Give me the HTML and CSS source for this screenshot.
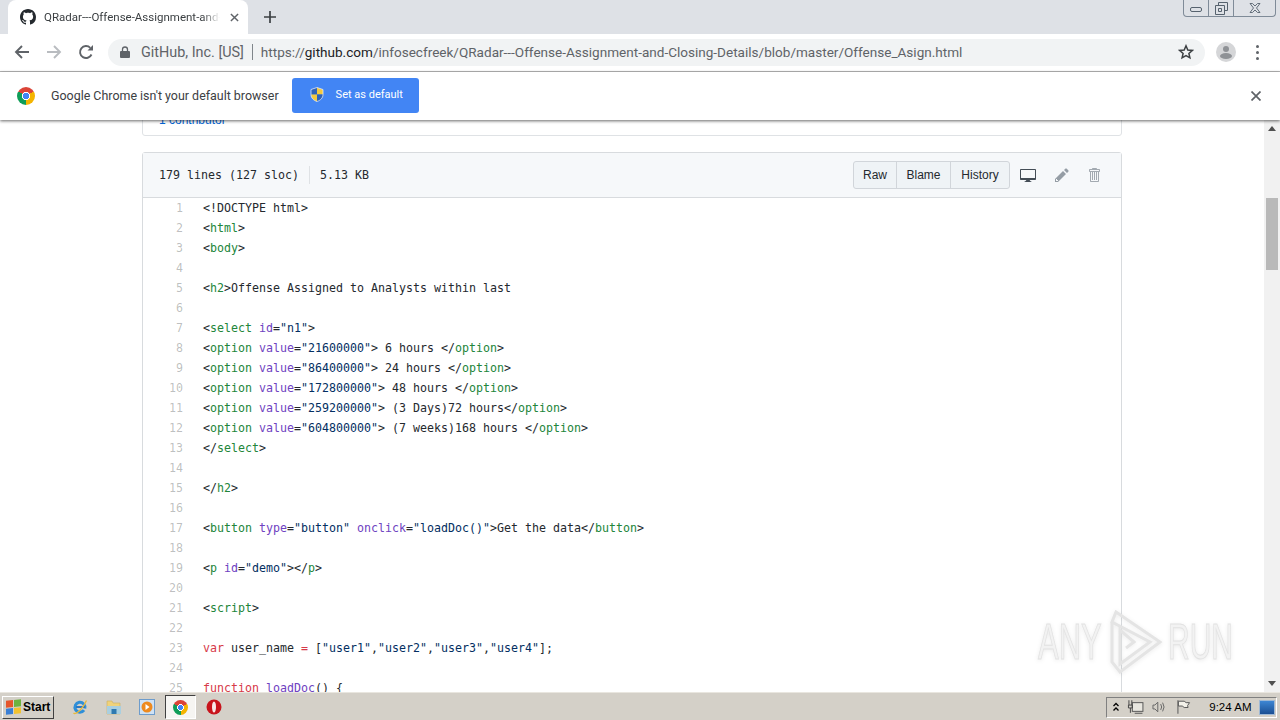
FILE: index.html
```html
<!DOCTYPE html>
<html lang="en">
<head>
    <meta charset="UTF-8">
    <title>QRadar---Offense-Assignment-and-Closing-Details/Offense_Asign.html</title>
    <link rel="stylesheet" href="styles.css">
</head>
<body>

    <div class="tab-strip">
        <div class="tab">
            <svg class="tab-icon" viewBox="0 0 16 16"><path fill="#24292e" d="M8 0C3.58 0 0 3.58 0 8c0 3.54 2.29 6.53 5.47 7.59.4.07.55-.17.55-.38 0-.19-.01-.82-.01-1.49-2.01.37-2.53-.49-2.69-.94-.09-.23-.48-.94-.82-1.13-.28-.15-.68-.52-.01-.53.63-.01 1.08.58 1.23.82.72 1.21 1.87.87 2.33.66.07-.52.28-.87.51-1.07-1.78-.2-3.64-.89-3.64-3.95 0-.87.31-1.59.82-2.15-.08-.2-.36-1.02.08-2.12 0 0 .67-.21 2.2.82.64-.18 1.32-.27 2-.27.68 0 1.36.09 2 .27 1.53-1.04 2.2-.82 2.2-.82.44 1.1.16 1.92.08 2.12.51.56.82 1.27.82 2.15 0 3.07-1.87 3.75-3.65 3.95.29.25.54.73.54 1.48 0 1.07-.01 1.93-.01 2.2 0 .21.15.46.55.38A8.013 8.013 0 0016 8c0-4.42-3.58-8-8-8z"/></svg>
            <span class="tab-title">QRadar---Offense-Assignment-and-Closing-Details</span>
            <svg class="tab-close" viewBox="0 0 10 10"><path d="M1 1l8 8M9 1l-8 8" stroke="#5f6368" stroke-width="1.6"/></svg>
        </div>
        <svg class="new-tab" viewBox="0 0 12 12"><path d="M6 0v12M0 6h12" stroke="#3c4043" stroke-width="1.7"/></svg>
        <div class="window-btns">
            <div class="win-btn win-min"><svg width="12" height="6" viewBox="0 0 12 6"><rect x=".5" y=".5" width="11" height="4" rx="1.5" fill="none" stroke="#56626e"/></svg></div>
            <div class="win-btn win-max"><svg width="13" height="13" viewBox="0 0 13 13"><path d="M3.5 3V.5h9v8H10M.5 3.5h9v9h-9zM3.5 6.5h3v3h-3z" fill="none" stroke="#56626e"/></svg></div>
            <div class="win-btn win-close"><svg width="12" height="10" viewBox="0 0 12 10"><path d="M1 .5h2.5L6 3l2.500-2.500H11L7.500 5 11 9.500H8.500L6 7 3.500 9.500H1L4.500 5z" fill="none" stroke="#56626e" stroke-width=".9"/></svg></div>
        </div>
    </div>

    <div class="toolbar">
        <svg class="nav-icon" viewBox="0 0 16 16"><path d="M15 8H2M8 2L2 8l6 6" fill="none" stroke="#5f6368" stroke-width="1.9"/></svg>
        <svg class="nav-icon" viewBox="0 0 16 16"><path d="M1 8h13M8 2l6 6-6 6" fill="none" stroke="#b9bcc0" stroke-width="1.9"/></svg>
        <svg class="nav-icon" viewBox="0 0 16 16"><path d="M13.500 10.500A6 6 0 1 1 12.300 3.800" fill="none" stroke="#5f6368" stroke-width="1.900"/><path d="M9.500 6.500H15V1z" fill="#5f6368"/></svg>
        <div class="omnibox">
            <svg class="lock" viewBox="0 0 10 12"><path fill="#5f6368" d="M1 5h8a1 1 0 0 1 1 1v5a1 1 0 0 1-1 1H1a1 1 0 0 1-1-1V6a1 1 0 0 1 1-1z"/><path d="M2.500 5.500V3.500a2.500 2.500 0 0 1 5 0v2" fill="none" stroke="#5f6368" stroke-width="1.300"/></svg>
            <span class="site-name">GitHub, Inc. [US]</span>
            <span class="omni-sep"></span>
            <span class="url">https://<b>github.com</b>/infosecfreek/QRadar---Offense-Assignment-and-Closing-Details/blob/master/Offense_Asign.html</span>
            <svg class="star" viewBox="0 0 16 16"><path d="M8 1.800l1.800 4.200 4.500.4-3.400 3 1 4.400L8 11.500l-3.900 2.300 1-4.400-3.400-3 4.500-.4z" fill="none" stroke="#3c4043" stroke-width="1.500"/></svg>
        </div>
        <div class="avatar"><svg width="20" height="20" viewBox="0 0 20 20"><circle cx="10" cy="7" r="3" fill="#8f9296"/><ellipse cx="10" cy="14" rx="6" ry="3" fill="#8f9296"/></svg></div>
        <div class="menu-dots"><i></i><i></i><i></i></div>
    </div>

    <div class="infobar">
        <span class="chrome-logo info-logo"></span>
        <span class="info-text">Google Chrome isn't your default browser</span>
        <button class="default-btn">
            <svg width="14" height="15" viewBox="0 0 14 15"><path d="M7 .5L1 2.500v5H7z" fill="#2f63b8"/><path d="M7 .5l6 2v5H7z" fill="#f4c93d"/><path d="M1 7.500C1 11 3.500 13.300 7 14.500v-7z" fill="#f4c93d"/><path d="M13 7.500c0 3.500-2.500 5.800-6 7v-7z" fill="#2f63b8"/><path d="M7 .5l6 2v5c0 3.500-2.500 5.800-6 7-3.500-1.200-6-3.500-6-7v-5z" fill="none" stroke="#dfe7f5" stroke-width=".8"/></svg>
            Set as default
        </button>
        <svg class="info-close" viewBox="0 0 10 10"><path d="M.5.500l9 9M9.500.500l-9 9" stroke="#5f6368" stroke-width="1.700"/></svg>
    </div>

    <div class="viewport">
        <div class="page">
            <div class="contrib-box">1 contributor</div>

            <div class="file-box">
                <div class="file-header">
                    <div class="file-info">
                        <span>179 lines (127 sloc)</span>
                        <span class="info-sep"></span>
                        <span>5.13 KB</span>
                    </div>
                    <div class="file-actions">
                        <div class="btn-group">
                            <a class="btn">Raw</a>
                            <a class="btn">Blame</a>
                            <a class="btn">History</a>
                        </div>
                        <svg class="act-icon act-desktop" width="16" height="16" viewBox="0 0 16 16"><path d="M15 2H1c-.55 0-1 .45-1 1v9c0 .55.45 1 1 1h5.340c-.25.61-.86 1.390-2.340 2h8c-1.480-.61-2.090-1.390-2.340-2H15c.55 0 1-.45 1-1V3c0-.55-.45-1-1-1zm0 9H1V3h14v8z"/></svg>
                        <svg class="act-icon act-pencil" width="14" height="16" viewBox="0 0 14 16"><path d="M0 12v3h3l8-8-3-3-8 8zm3 2H1v-2h1v1h1v1zm10.300-9.300L12 6 9 3l1.300-1.300a.996.996 0 011.410 0l1.590 1.590c.39.39.39 1.020 0 1.410z"/></svg>
                        <svg class="act-icon act-trash" width="12" height="16" viewBox="0 0 12 16"><path d="M11 2H9c0-.55-.45-1-1-1H5c-.55 0-1 .45-1 1H2c-.55 0-1 .45-1 1v1c0 .55.45 1 1 1v9c0 .55.45 1 1 1h7c.55 0 1-.45 1-1V5c.55 0 1-.45 1-1V3c0-.55-.45-1-1-1zm-1 12H3V5h1v8h1V5h1v8h1V5h1v8h1V5h1v9zm1-10H2V3h9v1z"/></svg>
                    </div>
                </div>

                <table class="code">
                    <tr><td class="num">1</td><td>&lt;!DOCTYPE html&gt;</td></tr>
                    <tr><td class="num">2</td><td>&lt;<span class="t">html</span>&gt;</td></tr>
                    <tr><td class="num">3</td><td>&lt;<span class="t">body</span>&gt;</td></tr>
                    <tr><td class="num">4</td><td></td></tr>
                    <tr><td class="num">5</td><td>&lt;<span class="t">h2</span>&gt;Offense Assigned to Analysts within last</td></tr>
                    <tr><td class="num">6</td><td></td></tr>
                    <tr><td class="num">7</td><td>&lt;<span class="t">select</span> <span class="a">id</span>=<span class="s">"n1"</span>&gt;</td></tr>
                    <tr><td class="num">8</td><td>&lt;<span class="t">option</span> <span class="a">value</span>=<span class="s">"21600000"</span>&gt; 6 hours &lt;/<span class="t">option</span>&gt;</td></tr>
                    <tr><td class="num">9</td><td>&lt;<span class="t">option</span> <span class="a">value</span>=<span class="s">"86400000"</span>&gt; 24 hours &lt;/<span class="t">option</span>&gt;</td></tr>
                    <tr><td class="num">10</td><td>&lt;<span class="t">option</span> <span class="a">value</span>=<span class="s">"172800000"</span>&gt; 48 hours &lt;/<span class="t">option</span>&gt;</td></tr>
                    <tr><td class="num">11</td><td>&lt;<span class="t">option</span> <span class="a">value</span>=<span class="s">"259200000"</span>&gt; (3 Days)72 hours&lt;/<span class="t">option</span>&gt;</td></tr>
                    <tr><td class="num">12</td><td>&lt;<span class="t">option</span> <span class="a">value</span>=<span class="s">"604800000"</span>&gt; (7 weeks)168 hours &lt;/<span class="t">option</span>&gt;</td></tr>
                    <tr><td class="num">13</td><td>&lt;/<span class="t">select</span>&gt;</td></tr>
                    <tr><td class="num">14</td><td></td></tr>
                    <tr><td class="num">15</td><td>&lt;/<span class="t">h2</span>&gt;</td></tr>
                    <tr><td class="num">16</td><td></td></tr>
                    <tr><td class="num">17</td><td>&lt;<span class="t">button</span> <span class="a">type</span>=<span class="s">"button"</span> <span class="a">onclick</span>=<span class="s">"loadDoc()"</span>&gt;Get the data&lt;/<span class="t">button</span>&gt;</td></tr>
                    <tr><td class="num">18</td><td></td></tr>
                    <tr><td class="num">19</td><td>&lt;<span class="t">p</span> <span class="a">id</span>=<span class="s">"demo"</span>&gt;&lt;/<span class="t">p</span>&gt;</td></tr>
                    <tr><td class="num">20</td><td></td></tr>
                    <tr><td class="num">21</td><td>&lt;<span class="t">script</span>&gt;</td></tr>
                    <tr><td class="num">22</td><td></td></tr>
                    <tr><td class="num">23</td><td><span class="k">var</span> user_name <span class="k">=</span> [<span class="s">"user1"</span>,<span class="s">"user2"</span>,<span class="s">"user3"</span>,<span class="s">"user4"</span>];</td></tr>
                    <tr><td class="num">24</td><td></td></tr>
                    <tr><td class="num">25</td><td><span class="k">function</span> <span class="a">loadDoc</span>() {</td></tr>
                </table>
            </div>
        </div>

        <div class="watermark">
            <span>ANY</span>
            <svg width="62" height="64" viewBox="0 0 62 64"><path d="M10 12v40l8 10 40-30L14 2l-4 10 38 20-30 22V20l14 12-8 6" fill="none" stroke="#e4e4e4" stroke-width="3"/></svg>
            <span>RUN</span>
        </div>

        <div class="scrollbar">
            <span class="arrow-up"></span>
            <div class="thumb"></div>
            <span class="arrow-down"></span>
        </div>
    </div>

    <div class="taskbar">
        <button class="start-btn">
            <span class="flag"><i class="f1"></i><i class="f2"></i><i class="f3"></i><i class="f4"></i></span>
            Start
        </button>
        <div class="quick-launch">
            <svg class="task-icon" viewBox="0 0 16 16"><path d="M12.800 9.500A5 5 0 1 0 12 11.200" fill="none" stroke="#2f8fd8" stroke-width="3"/><path d="M4 8h9" stroke="#2a78c4" stroke-width="2"/><path d="M1.500 14c2 2 9-3 13-12.500" fill="none" stroke="#e8b93a" stroke-width="1.300"/></svg>
            <svg class="task-icon" viewBox="0 0 16 16"><path d="M1 2h5l1 2h7v11H1z" fill="#f0d27a" stroke="#c9ae62" stroke-width=".6"/><path d="M1 7h14v8H1z" fill="#a9cfe0"/><path d="M5.500 15v-5h5v5z" fill="#2f79b0"/></svg>
            <svg class="task-icon" viewBox="0 0 16 16"><rect x=".5" y=".5" width="15" height="15" fill="#cfe2f5" stroke="#6d9ccc"/><circle cx="8" cy="8" r="5.500" fill="#ee8a1f"/><path d="M6.500 5l4 3-4 3z" fill="#fff"/></svg>
        </div>
        <div class="task-chrome"><span class="chrome-logo task-logo"></span></div>
        <svg class="task-opera" viewBox="0 0 16 16"><circle cx="8" cy="8" r="7.500" fill="#c8141c"/><ellipse cx="8" cy="8" rx="2" ry="5.500" fill="#f8e8e8"/></svg>
        <div class="tray">
            <svg class="tray-up" width="6" height="10" viewBox="0 0 6 10"><path d="M.5 4L3 1.500 5.500 4M.5 8.500L3 6l2.500 2.500" fill="none" stroke="black" stroke-width="1.300"/></svg>
            <svg width="18" height="16" viewBox="0 0 18 16"><rect x="5.500" y="3.500" width="11" height="9" fill="#e8e6df" stroke="#555"/><path d="M2 1v5M5 1v5M1.500 6h4v3h-4zM3.500 9v5" stroke="#444" fill="none"/><path d="M8 14.500h8" stroke="#555"/></svg>
            <svg width="16" height="16" viewBox="0 0 16 16"><path d="M1 6h2l3-3v10l-3-3H1zM9 5q2 3 0 6M11 3.500q3 4.500 0 9" fill="none" stroke="#666"/></svg>
            <svg width="16" height="16" viewBox="0 0 16 16"><path d="M2 1v14" stroke="#555"/><path d="M2.500 2h6l2 1.500 3.500 0-2 3 .5 2h-4l-2-1.500h-4z" fill="#f4f2ea" stroke="#555"/></svg>
            <span class="clock">9:24 AM</span>
            <span class="show-desktop"></span>
        </div>
    </div>

</body>
</html>
```

FILE: styles.css
```css
* {
    box-sizing: border-box;
}
html, body {
    height: 100%;
}
body {
    margin: 0;
    display: flex;
    flex-direction: column;
    overflow: hidden;
    background: white;
    font-family: "Liberation Sans", sans-serif;
}

/* browser chrome */
.tab-strip {
    height: 34px;
    flex: none;
    display: flex;
    background-color: #dee1e6;
    padding-left: 8px;
}
.tab {
    width: 240px;
    display: flex;
    align-items: center;
    padding: 0 9px 0 12px;
    background-color: white;
    border-radius: 8px 8px 0 0;
}
.tab-icon {
    width: 16px;
    height: 16px;
    flex: none;
}
.tab-title {
    margin-left: 8px;
    width: 176px;
    overflow: hidden;
    white-space: nowrap;
    font: 11.500px Roboto, sans-serif;
    color: #3c4043;
    -webkit-mask-image: linear-gradient(to right, black 90%, transparent);
}
.tab-close {
    width: 9px;
    height: 9px;
    margin-left: 10px;
    flex: none;
}
.new-tab {
    width: 12px;
    height: 12px;
    margin: 11px 0 0 16px;
}
.window-btns {
    margin-left: auto;
    margin-right: 4px;
    width: 93px;
    height: 17px;
    display: flex;
    border: 1px solid #7f8b98;
    border-top: none;
    border-radius: 0 0 4px 4px;
}
.win-btn {
    display: flex;
    align-items: center;
    justify-content: center;
}
.win-min {
    width: 25px;
    padding-top: 3px;
    border-right: 1px solid #7f8b98;
}
.win-max {
    width: 25px;
    border-right: 1px solid #7f8b98;
}
.win-close {
    flex: 1;
}

.toolbar {
    height: 38px;
    flex: none;
    display: flex;
    align-items: center;
    padding: 0 0 1px 14px;
    background-color: white;
    border-bottom: 1px solid #b8b8b8;
}
.nav-icon {
    width: 16px;
    height: 16px;
    margin-right: 16px;
    flex: none;
}
.omnibox {
    margin-left: -2px;
    width: 1097px;
    height: 27px;
    display: flex;
    align-items: center;
    padding: 0 11px 0 12px;
    background-color: #f1f3f4;
    border-radius: 14px;
    font: 14.400px Roboto, sans-serif;
    color: #5f6368;
    white-space: nowrap;
}
.lock {
    width: 10px;
    height: 12px;
    flex: none;
}
.site-name {
    margin-left: 11px;
}
.omni-sep {
    width: 1px;
    height: 16px;
    margin: 0 8px;
    background-color: #80868b;
}
.url {
    font-size: 13.550px;
}
.url b {
    font-weight: 400;
    color: #202124;
}
.star {
    width: 16px;
    height: 16px;
    margin-left: auto;
}
.avatar {
    width: 20px;
    height: 20px;
    margin-left: 11px;
    border-radius: 50%;
    background-color: #d5d6d8;
    overflow: hidden;
}
.menu-dots {
    margin-left: 20px;
    display: flex;
    flex-direction: column;
    gap: 3px;
}
.menu-dots i {
    width: 3px;
    height: 3px;
    border-radius: 50%;
    background-color: #5f6368;
}

.infobar {
    position: relative;
    z-index: 2;
    height: 48px;
    flex: none;
    display: flex;
    align-items: center;
    padding: 0 19px 1px 17px;
    background-color: white;
    box-shadow: 0 1px 3px rgba(0, 0, 0, 0.6);
}
.chrome-logo {
    display: block;
    border-radius: 50%;
    background:
        radial-gradient(circle, #4285f4 0 25%, white 26% 33%, transparent 34%),
        conic-gradient(from -60deg, #db4437 0 120deg, #f4b400 120deg 240deg, #0f9d58 240deg 360deg);
}
.info-logo {
    width: 18px;
    height: 18px;
}
.info-text {
    margin-left: 16px;
    font: 12.450px Roboto, sans-serif;
    color: #3c4043;
}
.default-btn {
    margin-left: 13px;
    width: 127px;
    height: 35px;
    display: flex;
    align-items: center;
    gap: 12px;
    padding: 0 0 2px 18px;
    border: none;
    border-radius: 3px;
    background-color: #4285f4;
    color: white;
    font: 11px Roboto, sans-serif;
}
.info-close {
    width: 10px;
    height: 10px;
    margin-left: auto;
}

/* page */
.viewport {
    position: relative;
    flex: 1;
    min-height: 0;
    display: flex;
    overflow: hidden;
}
.page {
    flex: 1;
    min-width: 0;
}
.contrib-box {
    width: 980px;
    height: 40px;
    margin: -24px auto 16px;
    padding: 15px 16px 0;
    border: 1px solid #dfe2e5;
    border-radius: 0 0 3px 3px;
    font-size: 12px;
    line-height: 16px;
    color: #0366d6;
}
.file-box {
    width: 980px;
    margin: 0 auto;
    border: 1px solid #d8dbde;
    border-radius: 3px 3px 0 0;
}
.file-header {
    height: 45px;
    display: flex;
    align-items: center;
    justify-content: space-between;
    padding: 0 21px 0 16px;
    background-color: #f6f8fa;
    border-bottom: 1px solid #d8dbde;
}
.file-info {
    display: flex;
    align-items: center;
    font: 11.630px "DejaVu Sans Mono", monospace;
    color: #24292e;
}
.info-sep {
    width: 1px;
    height: 18px;
    margin: 0 10px;
    background-color: #dfe2e5;
}
.file-actions {
    display: flex;
    align-items: center;
}
.btn-group {
    display: flex;
    height: 28px;
    border: 1px solid #d1d5da;
    border-radius: 3px;
    background-color: #eff3f6;
}
.btn {
    display: flex;
    align-items: center;
    justify-content: center;
    font-size: 12px;
    color: #24292e;
    border-right: 1px solid #d1d5da;
}
.btn:nth-child(1) {
    width: 43px;
}
.btn:nth-child(2) {
    width: 54px;
}
.btn:nth-child(3) {
    width: 58px;
    border-right: none;
}
.act-icon {
    fill: #6a737d;
}
.act-desktop {
    margin-left: 10px;
    fill: #444d56;
}
.act-pencil {
    margin-left: 19px;
    fill: #959da5;
}
.act-trash {
    margin-left: 19px;
    fill: #a3aab1;
}

.code {
    border-collapse: collapse;
    font: 11.630px/20px "DejaVu Sans Mono", monospace;
    color: #24292e;
}
.code td {
    padding: 0;
    height: 20px;
    white-space: pre;
}
.num {
    width: 40px;
    padding-right: 0;
    text-align: right;
    color: rgba(27, 31, 35, 0.3) !important;
}
.code td + td {
    padding-left: 20px;
}
.t {
    color: #22863a;
}
.a {
    color: #6f42c1;
}
.s {
    color: #032f62;
}
.k {
    color: #d73a49;
}

.watermark {
    position: absolute;
    left: 1038px;
    top: 490px;
    display: flex;
    align-items: center;
    gap: 2px;
    font-size: 50px;
    line-height: 64px;
    color: #f2f2f2;
    -webkit-text-stroke: 1px #e2e2e2;
    filter: drop-shadow(0 1px 2px rgba(0, 0, 0, 0.08));
}
.watermark span {
    display: block;
    width: 62px;
    transform: scaleX(0.62);
    transform-origin: left center;
}
.watermark span:last-child {
    width: 66px;
    margin-left: 2px;
    transform: scaleX(0.6);
}

.scrollbar {
    width: 16px;
    flex: none;
    display: flex;
    flex-direction: column;
    align-items: center;
    background-color: #f1f1f1;
}
.arrow-up {
    margin-top: 6px;
    border: 4px solid transparent;
    border-top: none;
    border-bottom: 5px solid #505050;
}
.thumb {
    width: 12px;
    height: 72px;
    margin-top: 67px;
    background-color: #b9b9b9;
}
.arrow-down {
    margin-top: auto;
    margin-bottom: 6px;
    border: 4px solid transparent;
    border-bottom: none;
    border-top: 5px solid #505050;
}

/* windows taskbar */
.taskbar {
    height: 28px;
    flex: none;
    display: flex;
    align-items: center;
    padding: 1px 3px 0 2px;
    background-color: #d4d0c8;
    border-top: 1px solid #e9e6df;
}
.start-btn {
    width: 52px;
    height: 23px;
    display: flex;
    align-items: center;
    gap: 2px;
    padding: 0 0 0 3px;
    background-color: #d4d0c8;
    border: 1px solid;
    border-color: #fff #404040 #404040 #fff;
    font: 700 12px "Liberation Sans", sans-serif;
    color: black;
}
.flag {
    width: 15px;
    height: 14px;
    display: grid;
    grid-template-columns: 1fr 1fr;
    gap: 1px;
    transform: skewY(-6deg);
}
.f1 {
    background-color: #e5562b;
}
.f2 {
    background-color: #6cb33f;
}
.f3 {
    background-color: #3a7fd5;
}
.f4 {
    background-color: #f2c230;
}
.quick-launch {
    display: flex;
    gap: 17.500px;
    margin-left: 18px;
}
.task-icon {
    width: 16px;
    height: 16px;
}
.task-chrome {
    width: 31px;
    height: 24px;
    margin-left: 10px;
    display: flex;
    align-items: center;
    justify-content: center;
    background-color: #f6f5f2;
    border: 1px solid;
    border-color: #404040 #fff #fff #404040;
}
.task-logo {
    width: 15px;
    height: 15px;
}
.task-opera {
    width: 16px;
    height: 16px;
    margin-left: 10px;
}
.tray {
    margin-left: auto;
    width: 171px;
    height: 21px;
    display: flex;
    align-items: center;
    gap: 8px;
    padding: 0 1px 0 6px;
    border: 1px solid;
    border-color: #808080 #fff #fff #808080;
}
.tray-up {
    flex: none;
}
.clock {
    margin-left: 10px;
    font-size: 11.500px;
    white-space: nowrap;
    color: black;
}
.show-desktop {
    width: 16px;
    height: 15px;
    margin-left: auto;
    background: linear-gradient(#3d86d3, #1b4f93);
    border: 1px solid #9fb9d5;
}
```
